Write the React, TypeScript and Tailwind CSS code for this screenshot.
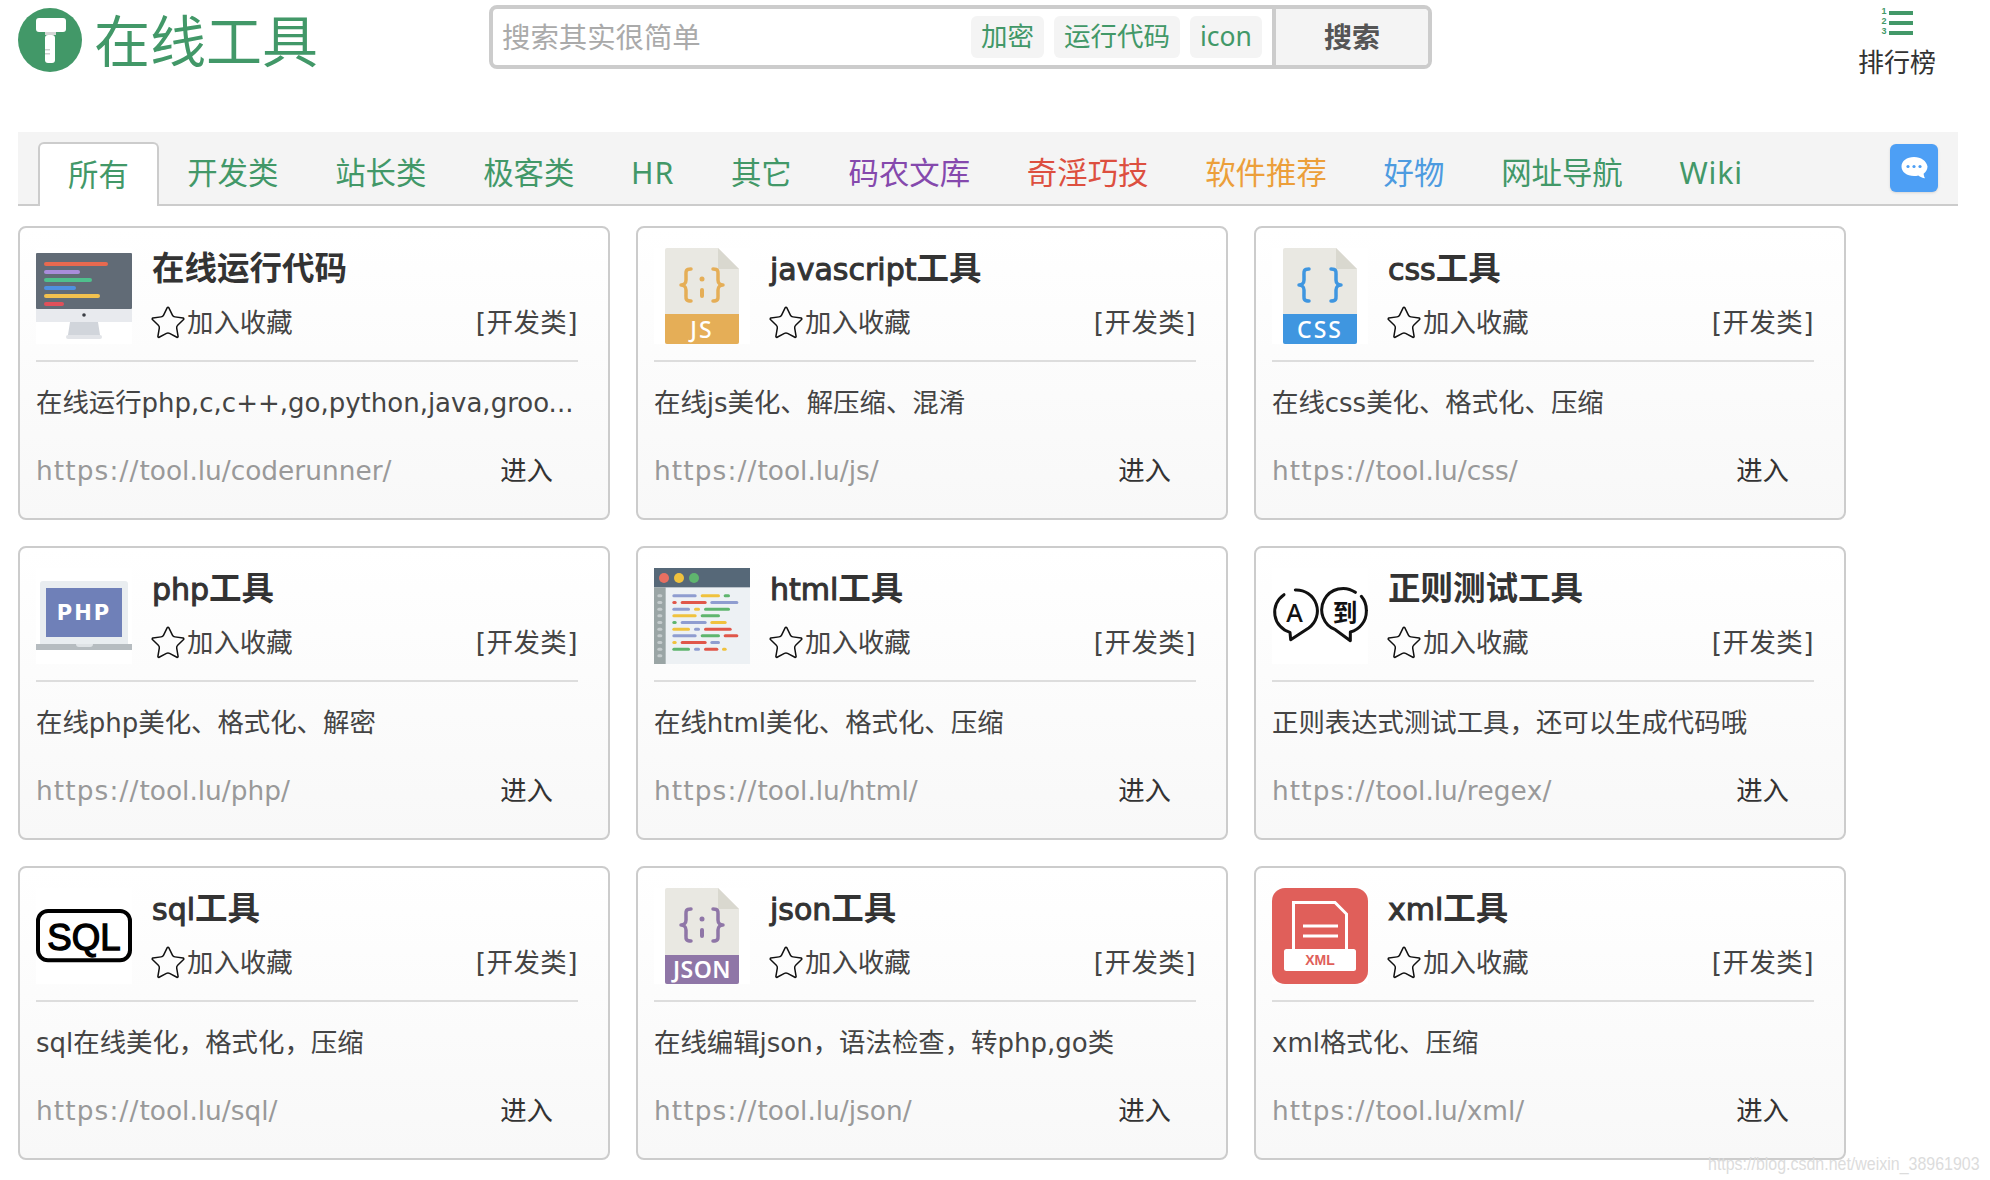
import { ReactNode } from "react"
import { Star } from "lucide-react"

function Logo() {
  return (
    <svg width="64" height="64" viewBox="0 0 64 64" className="shrink-0">
      <circle cx="32" cy="32" r="32" fill="#429868" />
      <rect x="18" y="10" width="30" height="14" rx="3" fill="#fff" />
      <rect x="27" y="24" width="11" height="3" fill="#d5d5d5" />
      <rect x="27" y="27" width="10" height="28" rx="3" fill="#fff" />
      <rect x="27" y="41" width="5" height="1.5" fill="#cfcfcf" />
      <rect x="27" y="45" width="5" height="1.5" fill="#cfcfcf" />
    </svg>
  )
}

function RankIcon() {
  return (
    <svg width="32" height="30" viewBox="0 0 32 30" fill="#429868">
      <rect x="8" y="6" width="24" height="4" />
      <rect x="8" y="16" width="24" height="4" />
      <rect x="8" y="26" width="24" height="4" />
      <text x="3" y="9" fontSize="9" fontWeight="700" textAnchor="middle" fontFamily="'Liberation Sans', sans-serif">1</text>
      <text x="3" y="19" fontSize="9" fontWeight="700" textAnchor="middle" fontFamily="'Liberation Sans', sans-serif">2</text>
      <text x="3" y="29" fontSize="9" fontWeight="700" textAnchor="middle" fontFamily="'Liberation Sans', sans-serif">3</text>
    </svg>
  )
}

function ChatIcon() {
  return (
    <svg width="28" height="26" viewBox="0 0 28 26">
      <path d="M14 2C6.8 2 1.5 6 1.5 11.5S6.8 21 14 21c1.5 0 3-.2 4.3-.6 1.8 1.5 4.2 2.5 6.7 2.9-.8-1.3-1.3-2.8-1.4-4.5 2.4-1.7 3.9-4.4 3.9-7.3C26.5 6 21.2 2 14 2z" fill="#fff" />
      <circle cx="8" cy="11.5" r="1.6" fill="#4d9ff5" />
      <circle cx="14" cy="11.5" r="1.6" fill="#4d9ff5" />
      <circle cx="20" cy="11.5" r="1.6" fill="#4d9ff5" />
    </svg>
  )
}

function MonitorIcon() {
  return (
    <svg viewBox="0 0 96 96" className="h-full w-full">
      <rect x="0" y="5" width="96" height="56" rx="1" fill="#616b76" />
      <rect x="0" y="61" width="96" height="13" fill="#e8eaee" />
      <circle cx="48" cy="67" r="1.8" fill="#3b3f45" />
      <path d="M34 74h28l2 13H32z" fill="#d1d5db" />
      <rect x="30" y="87" width="36" height="4" rx="2" fill="#e2e4e8" />
      <rect x="8" y="14" width="64" height="4" rx="2" fill="#e8694f" />
      <rect x="8" y="22" width="36" height="4" rx="2" fill="#a98ddb" />
      <rect x="8" y="30" width="48" height="4" rx="2" fill="#4fc08d" />
      <rect x="8" y="38" width="32" height="4" rx="2" fill="#4f90e0" />
      <rect x="8" y="46" width="56" height="4" rx="2" fill="#f2c14e" />
      <rect x="8" y="54" width="20" height="4" rx="2" fill="#e0505a" />
    </svg>
  )
}

function FileIcon({ color, label, dots = true, band = 66 }: { color: string; label: string; dots?: boolean; band?: number }) {
  return (
    <svg viewBox="0 0 96 96" className="h-full w-full">
      <path d="M13 0h51l21 21v73a2 2 0 0 1-2 2H13a2 2 0 0 1-2-2V2a2 2 0 0 1 2-2z" fill="#e9e8e2" />
      <path d="M64 0l21 21H64z" fill="#d9d8cf" />
      <path d={`M11 ${band}h74v${94 - band}a2 2 0 0 1-2 2H13a2 2 0 0 1-2-2z`} fill={color} />
      <g fill="none" stroke={color} strokeWidth="3.5" strokeLinecap="round" strokeLinejoin="round">
        <path d="M37 21c-6 0-5 3-5 7v4c0 3-2 5-5 5 3 0 5 2 5 5v4c0 4-1 7 5 7" />
        <path d="M59 21c6 0 5 3 5 7v4c0 3 2 5 5 5-3 0-5 2-5 5v4c0 4 1 7-5 7" />
      </g>
      {dots && (
        <g fill={color}>
          <circle cx="48" cy="31" r="2.5" />
          <rect x="46" y="40" width="4" height="10" rx="2" />
        </g>
      )}
      <text x="48" y="90" fill="#fff" fontSize="23" fontWeight={label === "JSON" ? 600 : 500} letterSpacing={label === "JSON" ? 0.5 : 2} textAnchor="middle" fontFamily="'Noto Sans', sans-serif">
        {label}
      </text>
    </svg>
  )
}

function PhpIcon() {
  return (
    <svg viewBox="0 0 96 96" className="h-full w-full">
      <path d="M7 13h82a3 3 0 0 1 3 3v60H4V16a3 3 0 0 1 3-3z" fill="#e9edf0" />
      <rect x="10" y="20" width="76" height="49" fill="#6f80b8" />
      <rect x="0" y="76" width="96" height="6" fill="#b6bcc0" />
      <path d="M40 76h17a3 3 0 0 1-3 3H43a3 3 0 0 1-3-3z" fill="#dfe3e6" />
      <text x="48" y="52" fill="#fff" fontSize="21" fontWeight="700" letterSpacing="2" textAnchor="middle" fontFamily="'DejaVu Sans', sans-serif">PHP</text>
    </svg>
  )
}

const codeColors: Record<string, string> = { b: "#8f9dd0", y: "#f0c23e", g: "#5fb56e", r: "#e0574a" }
const codeRows: [number, number, string][][] = [
  [[55, 128, "b"], [140, 198, "y"], [209, 228, "g"]],
  [[55, 68, "r"], [80, 158, "r"], [169, 253, "b"]],
  [[55, 108, "b"], [120, 138, "y"], [150, 228, "g"]],
  [[55, 128, "y"], [140, 198, "g"]],
  [[55, 68, "g"], [80, 158, "b"], [169, 218, "y"]],
  [[55, 108, "y"], [120, 138, "b"], [150, 233, "r"]],
  [[55, 128, "b"], [140, 198, "g"], [209, 253, "r"]],
  [[55, 68, "y"], [80, 158, "r"], [169, 198, "b"]],
  [[55, 108, "g"], [120, 138, "b"], [150, 193, "r"], [204, 218, "y"]],
]

function HtmlIcon() {
  return (
    <svg viewBox="0 0 288 288" className="h-full w-full">
      <rect width="288" height="288" fill="#edf1f4" />
      <rect width="288" height="58" fill="#566878" />
      <rect y="58" width="35" height="230" fill="#9aa5a5" />
      <circle cx="30" cy="30" r="15" fill="#e76f61" />
      <circle cx="75" cy="30" r="15" fill="#f0c23e" />
      <circle cx="120" cy="30" r="15" fill="#5fb56e" />
      {Array.from({ length: 10 }).map((_, i) => (
        <rect key={i} x="10" y={79 + i * 20} width="15" height="9" rx="4.5" fill="#c4cbcc" />
      ))}
      {codeRows.map((row, i) =>
        row.map(([a, b, c]) => (
          <rect key={i + "-" + a} x={a} y={79 + i * 20} width={b - a} height="9" rx="4.5" fill={codeColors[c]} />
        ))
      )}
    </svg>
  )
}

function RegexIcon() {
  return (
    <svg viewBox="0 0 288 288" className="h-full w-full">
      <g fill="none" stroke="#111" strokeWidth="9" strokeLinejoin="round" strokeLinecap="round">
        <path d="M70 66a63 63 0 0 1 40 114l-54 35-2-22a63 63 0 0 1-18-113" />
        <path d="M250 73a64 64 0 1 0-60 112l45 33v-26a64 64 0 0 0 48-64 64 64 0 0 0-15-43" />
      </g>
      <text x="68" y="161" fontSize="76" fontWeight="500" textAnchor="middle" fill="#111" fontFamily="'Noto Sans', sans-serif">A</text>
      <text x="219" y="163" fontSize="74" fontWeight="700" textAnchor="middle" fill="#111" fontFamily="'Noto Sans CJK SC', sans-serif">到</text>
    </svg>
  )
}

function SqlIcon() {
  return (
    <svg viewBox="0 0 288 288" className="h-full w-full">
      <rect x="6" y="69" width="276" height="148" rx="30" fill="none" stroke="#000" strokeWidth="12" />
      <text x="144" y="185" fontSize="110" textAnchor="middle" fill="#000" stroke="#000" strokeWidth="4" fontFamily="'Liberation Sans', sans-serif">SQL</text>
    </svg>
  )
}

function XmlIcon() {
  return (
    <svg viewBox="0 0 96 96" className="h-full w-full">
      <rect width="96" height="96" rx="13" fill="#e05f5a" />
      <path d="M21.5 62V14.5H63L74.5 26v36" fill="none" stroke="#fff" strokeWidth="3" />
      <path d="M31 38h35M31 48h35" stroke="#fff" strokeWidth="3" />
      <rect x="12" y="61" width="72" height="22" rx="2.5" fill="#fff" />
      <text x="48" y="77" fontSize="14" fontWeight="700" textAnchor="middle" fill="#e05f5a" fontFamily="'Liberation Sans', sans-serif">XML</text>
    </svg>
  )
}

type Tool = { title: string; desc: string; url: string; icon: ReactNode }

const tools: Tool[] = [
  { title: "在线运行代码", desc: "在线运行php,c,c++,go,python,java,groo...", url: "https://tool.lu/coderunner/", icon: <MonitorIcon /> },
  { title: "javascript工具", desc: "在线js美化、解压缩、混淆", url: "https://tool.lu/js/", icon: <FileIcon color="#e5ae57" label="JS" /> },
  { title: "css工具", desc: "在线css美化、格式化、压缩", url: "https://tool.lu/css/", icon: <FileIcon color="#3f96e0" label="CSS" dots={false} /> },
  { title: "php工具", desc: "在线php美化、格式化、解密", url: "https://tool.lu/php/", icon: <PhpIcon /> },
  { title: "html工具", desc: "在线html美化、格式化、压缩", url: "https://tool.lu/html/", icon: <HtmlIcon /> },
  { title: "正则测试工具", desc: "正则表达式测试工具，还可以生成代码哦", url: "https://tool.lu/regex/", icon: <RegexIcon /> },
  { title: "sql工具", desc: "sql在线美化，格式化，压缩", url: "https://tool.lu/sql/", icon: <SqlIcon /> },
  { title: "json工具", desc: "在线编辑json，语法检查，转php,go类", url: "https://tool.lu/json/", icon: <FileIcon color="#8f76a7" label="JSON" band={67} /> },
  { title: "xml工具", desc: "xml格式化、压缩", url: "https://tool.lu/xml/", icon: <XmlIcon /> },
]

const tabs = [
  { name: "开发类", color: "text-[#429868]" },
  { name: "站长类", color: "text-[#429868]" },
  { name: "极客类", color: "text-[#429868]" },
  { name: "HR", color: "text-[#429868] tracking-[0.8px]" },
  { name: "其它", color: "text-[#429868]" },
  { name: "码农文库", color: "text-[#8549ad]" },
  { name: "奇淫巧技", color: "text-[#dd4f3f]" },
  { name: "软件推荐", color: "text-[#ec9f3a]" },
  { name: "好物", color: "text-[#4d9be0]" },
  { name: "网址导航", color: "text-[#429868]" },
  { name: "Wiki", color: "text-[#429868] tracking-[0.8px]" },
]

// latin part of a title is smaller and only faux-bold in the picture
function CardTitle({ text }: { text: string }) {
  const latin = text.match(/^[a-z]*/)?.[0] ?? ""
  return (
    <div className="h-[42px] text-[32.5px] font-bold leading-[42px] text-[#333]">
      {latin && <span className="text-[30px] font-normal [-webkit-text-stroke:1px_#333]">{latin}</span>}
      {text.slice(latin.length)}
    </div>
  )
}

// cjk runs come out a little larger than the latin ones
function Desc({ text }: { text: string }) {
  return (
    <div className="h-20 whitespace-nowrap text-[26.4px] leading-[82px] text-[#444]">
      {text.split(/([\x00-\x7f]+)/).map((part, i) =>
        i % 2 ? (
          <span key={i} className="text-[26px]">
            {part}
          </span>
        ) : (
          part
        )
      )}
    </div>
  )
}

function ToolCard({ tool }: { tool: Tool }) {
  return (
    <div className="h-[294px] rounded-lg border-2 border-[#ccc] bg-gradient-to-b from-white to-[#f8f8f8] pl-4 pr-[30px] pt-5">
      <div className="flex h-24">
        <div className="h-24 w-24 shrink-0 bg-white">{tool.icon}</div>
        <div className="ml-5 min-w-0 flex-1">
          <CardTitle text={tool.title} />
          <div className="mt-[13px] flex h-10 items-center text-[26.4px] text-[#444]">
            <Star size={38} strokeWidth={0.95} className="-ml-[3px] shrink-0 text-[#111]" />
            <span>加入收藏</span>
            <span className="ml-auto whitespace-nowrap tracking-[0.5px]">[开发类]</span>
          </div>
        </div>
      </div>
      <div className="mt-4 border-b-2 border-[#ddd]" />
      <Desc text={tool.desc} />
      <div className="flex h-[58px] items-center text-[26.4px]">
        <span className="text-[#999] [font-kerning:none]">
          <span className="tracking-[1.1px]">{tool.url.slice(0, 8)}</span>
          {tool.url.slice(8)}
        </span>
        <a className="ml-auto px-[25px] text-[#333]">进入</a>
      </div>
    </div>
  )
}

export default function App() {
  return (
    <div className="relative h-[1180px] w-[1990px] overflow-hidden bg-white font-['DejaVu_Sans','Noto_Sans_CJK_SC',sans-serif]">
      <header className="flex h-[132px] items-start pl-[18px] pr-[54px] font-['Noto_Sans','Noto_Sans_CJK_SC',sans-serif]">
        <div className="flex w-[471px] items-center pt-2">
          <Logo />
          <span className="ml-[12px] text-[56px] leading-[64px] text-[#429868]">在线工具</span>
        </div>
        <div className="mt-[5px] flex h-16 w-[943px] overflow-hidden rounded-lg border-4 border-[#ccc]">
          <div className="flex flex-1 items-center pl-[9px] pr-[10px]">
            <span className="text-[28.4px] text-[#aaa]">搜索其实很简单</span>
            <div className="ml-auto flex gap-[10px] text-[26.5px] text-[#429868]">
              <span className="flex h-[42px] items-center rounded-md bg-[#f4f4f4] px-[10px]">加密</span>
              <span className="flex h-[42px] items-center rounded-md bg-[#f4f4f4] px-[10px]">运行代码</span>
              <span className="flex h-[42px] items-center rounded-md bg-[#f4f4f4] px-[10px]">icon</span>
            </div>
          </div>
          <button className="w-[156px] border-l-4 border-[#ccc] bg-[#f4f4f4] text-[28px] font-bold text-[#555]">搜索</button>
        </div>
        <div className="ml-auto flex w-[78px] flex-col items-center pt-[5px] text-[26px] leading-[36px] text-[#333]">
          <RankIcon />
          <span className="mt-[9px]">排行榜</span>
        </div>
      </header>

      <nav className="ml-[18px] flex h-[74px] w-[1940px] border-b-2 border-[#ccc] bg-[#f4f4f4] pl-[20px] font-['Noto_Sans','Noto_Sans_CJK_SC',sans-serif] text-[30.4px]">
        <a className="mt-[10px] flex h-[64px] items-center rounded-t-md border-2 border-b-0 border-[#ccc] bg-white px-[28px] text-[#429868]">所有</a>
        {tabs.map((t) => (
          <a key={t.name} className={"mt-[10px] flex h-[62px] items-center px-[28.4px] " + t.color}>
            {t.name}
          </a>
        ))}
        <button className="ml-auto mr-5 mt-3 flex h-12 w-12 items-center justify-center rounded-md bg-[#4d9ff5] shadow-sm">
          <ChatIcon />
        </button>
      </nav>

      <main className="mt-5 grid w-[1846px] grid-cols-[repeat(3,592px)] gap-x-[26px] gap-y-[26px] pl-[18px]">
        {tools.map((t) => (
          <ToolCard key={t.title} tool={t} />
        ))}
      </main>

      <div className="absolute left-[1708px] top-[1150px] origin-left scale-x-[0.84] whitespace-nowrap font-['Liberation_Sans',sans-serif] text-[19px] text-[#dcdcdc]">
        https://blog.csdn.net/weixin_38961903
      </div>
    </div>
  )
}
